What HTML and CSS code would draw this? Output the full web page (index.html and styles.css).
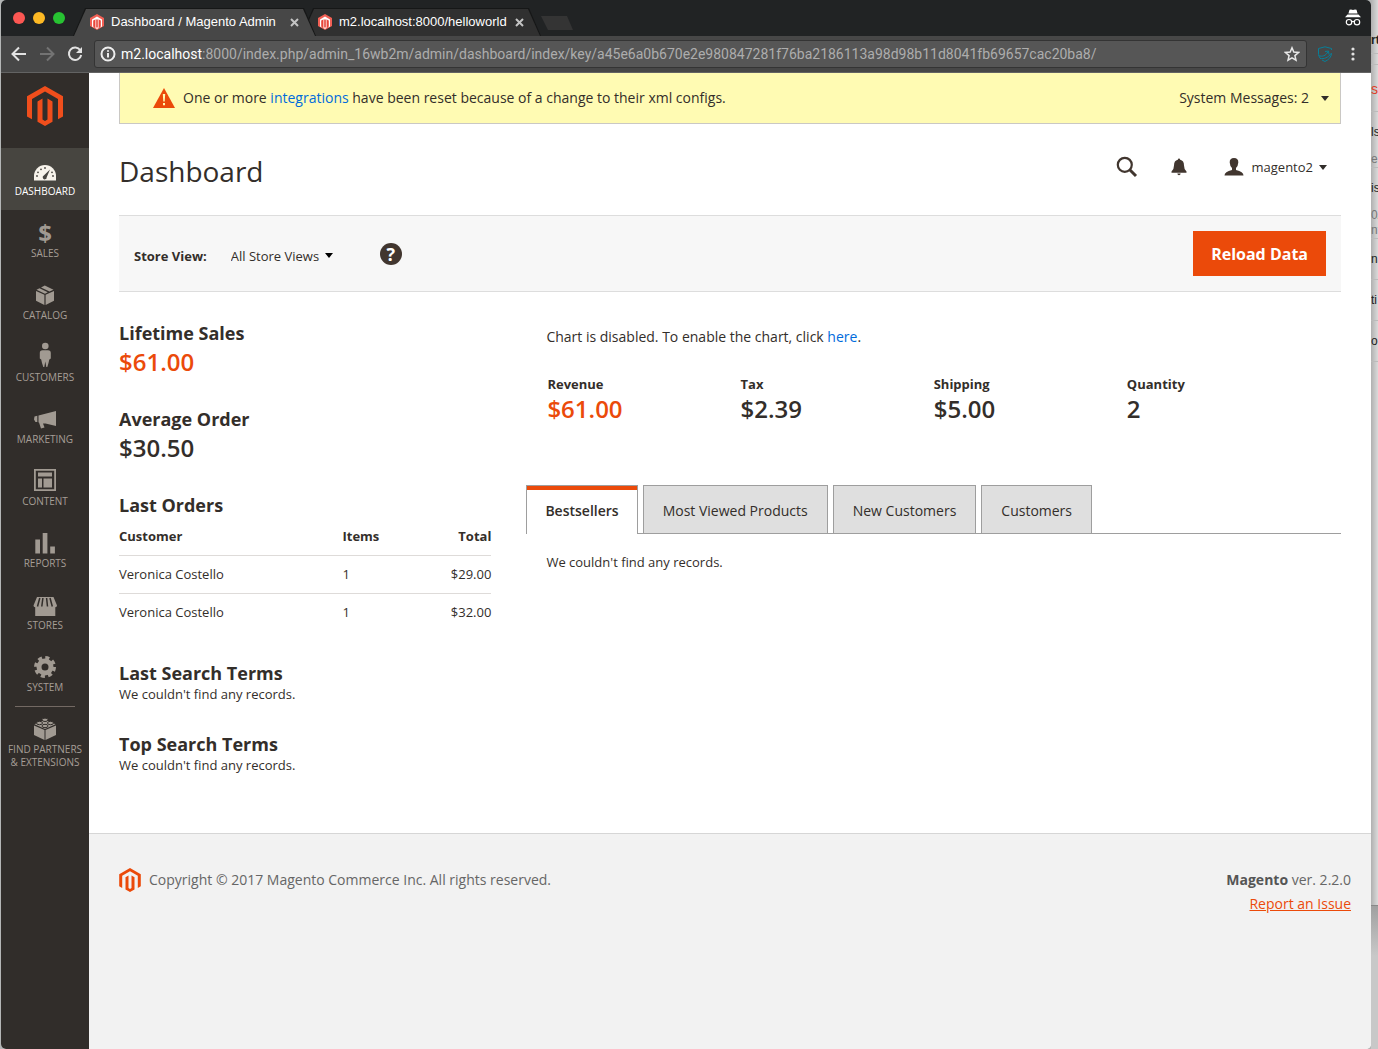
FILE: index.html
```html
<!DOCTYPE html>
<html lang="en">
<head>
    <meta charset="UTF-8">
    <meta name="viewport" content="width=device-width, initial-scale=1.0">
    <title>Dashboard / Magento Admin</title>
    <link rel="stylesheet" href="styles.css">
</head>
<body>
    <!-- Shared logo shape -->
    <svg class="defs" width="0" height="0" aria-hidden="true">
        <symbol id="logo" viewBox="0 0 36 40">
            <path d="M18 0 L36 10.300V30.500L31 33.300V13L18 5.500L5 13V33.300L0 30.500V10.300Z"/>
            <path d="M15.500 12.500V33.500L18 35L20.500 33.500V12.500L25.500 15.500V35.700L18 40L10.500 35.700V15.500Z"/>
        </symbol>
        <symbol id="favicon" viewBox="0 0 14 16">
            <path fill="#f26055" d="M7 0 14 4V12L7 16 0 12V4Z"/>
            <path fill="#fff" d="M7 2.500 12 5.500V12.500L10.500 13.400V6.500L8.500 5.300V14L7 15 5.500 14V5.300L3.500 6.500V13.400L2 12.500V5.500Z"/>
            <path fill="#e02a1e" d="M6.300 5.500H7.700V13.500H6.300ZM3.500 6.500 4.500 6V13L3.500 12.500ZM9.500 6 10.500 6.500V12.500L9.500 13Z"/>
        </symbol>
    </svg>

    <div class="browser">
        <div class="tab-strip">
            <div class="lights">
                <span class="light red"></span>
                <span class="light yellow"></span>
                <span class="light green"></span>
            </div>
            <div class="browser-tab current">
                <svg class="favicon"><use href="#favicon"/></svg>
                <span class="tab-title">Dashboard / Magento Admin</span>
                <button class="tab-close" aria-label="Close tab">
                    <svg width="9" height="9" viewBox="0 0 9 9"><path d="M1 1 8 8M8 1 1 8"/></svg>
                </button>
            </div>
            <div class="browser-tab">
                <svg class="favicon"><use href="#favicon"/></svg>
                <span class="tab-title">m2.localhost:8000/helloworld</span>
                <button class="tab-close" aria-label="Close tab">
                    <svg width="9" height="9" viewBox="0 0 9 9"><path d="M1 1 8 8M8 1 1 8"/></svg>
                </button>
            </div>
            <button class="new-tab" aria-label="New tab"></button>
            <svg class="incognito" width="18" height="18" viewBox="0 0 18 18">
                <path fill="#fff" d="M5.500 0.800 7 0.400 9 1 11 0.400 12.500 0.800 13.600 4.600H4.400ZM3.500 5.600H14.500L17 8.200H1Z"/>
                <g fill="none" stroke="#fff" stroke-width="1.200"><circle cx="5" cy="13.200" r="2.700"/><circle cx="13" cy="13.200" r="2.700"/><path d="M7.700 12.800Q9 12 10.300 12.800"/></g>
            </svg>
        </div>

        <div class="nav-bar">
            <button class="nav-button" aria-label="Back">
                <svg width="16" height="16" viewBox="0 0 16 16"><path d="M15 8H2M8 1.500 1.500 8 8 14.500"/></svg>
            </button>
            <button class="nav-button disabled" aria-label="Forward">
                <svg width="16" height="16" viewBox="0 0 16 16"><path d="M1 8H14M8 1.500 14.500 8 8 14.500"/></svg>
            </button>
            <button class="nav-button" aria-label="Reload">
                <svg width="16" height="16" viewBox="0 0 16 16"><path d="M13.300 4.300A6.200 6.200 0 1 0 14.200 9"/><path class="solid" d="M15 1V7H9Z"/></svg>
            </button>
            <div class="address">
                <svg class="info" width="16" height="16" viewBox="0 0 16 16"><circle cx="8" cy="8" r="6.500"/><path d="M8 7V11.500M8 4.200V5.800"/></svg>
                <span class="host">m2.localhost</span>
                <input type="text" class="url" aria-label="Address" value=":8000/index.php/admin_16wb2m/admin/dashboard/index/key/a45e6a0b670e2e980847281f76ba2186113a98d98b11d8041fb69657cac20ba8/">
                <svg class="star" width="16" height="16" viewBox="0 0 16 16"><path d="M8 1.800 9.800 6.100 14.500 6.500 10.900 9.600 12 14.200 8 11.800 4 14.200 5.100 9.600 1.500 6.500 6.200 6.100Z"/></svg>
            </div>
            <svg class="shield" width="16" height="16" viewBox="0 0 16 16"><path d="M14.500 4V2.500L8 0.800 1.500 2.500V7C1.500 9 2 10.500 3 12M5 14 8 15.500C12 13.500 14.300 11 14.500 7.500"/><path d="M1.500 9.500C5 11 9 10 11 5.500M8 5.500 11.500 5 12 8.500M3 12.500C7 13 11 12 14.500 7"/></svg>
            <svg class="dots" width="4" height="14" viewBox="0 0 4 14"><circle cx="2" cy="2" r="1.600"/><circle cx="2" cy="7" r="1.600"/><circle cx="2" cy="12" r="1.600"/></svg>
        </div>

        <div class="admin">
            <nav class="menu">
                <a href="#" class="menu-logo" aria-label="Magento"><svg width="36" height="40"><use href="#logo"/></svg></a>
                <a href="#" class="menu-item active">
                    <svg viewBox="0 0 24 24"><path d="M1 23.500V19A11 11 0 0 1 23 19V23.500Z"/><g class="cut"><path d="M17 12.500 13.700 20.200A2 2 0 1 1 10.800 18.600Z"/><circle cx="4" cy="19" r="0.900"/><circle cx="5" cy="15.300" r="0.900"/><circle cx="8" cy="12.300" r="0.900"/><circle cx="12" cy="11" r="0.900"/><circle cx="19" cy="15.300" r="0.900"/><circle cx="20" cy="19" r="0.900"/></g></svg>
                    <span>Dashboard</span>
                </a>
                <a href="#" class="menu-item">
                    <svg viewBox="0 0 24 24"><text class="dollar" x="12" y="23" text-anchor="middle">$</text></svg>
                    <span>Sales</span>
                </a>
                <a href="#" class="menu-item">
                    <svg viewBox="0 0 24 24"><path d="M3 10 11.400 13.800V24L3 19.800ZM12.600 13.800 21 10V19.800L12.600 24ZM3.500 8.800 6.500 7.300 14.800 11.300 12 12.700ZM8 6.500 11.800 4.500 20.500 8.800 16.500 10.600Z"/></svg>
                    <span>Catalog</span>
                </a>
                <a href="#" class="menu-item">
                    <svg viewBox="0 0 24 24"><circle cx="12.300" cy="3" r="3.300"/><path d="M9.500 7.200H15Q17.800 7.200 17.800 10V15.500L16.300 16.500 15.500 20 14.300 24H13.300L12.300 18.500 11.300 24H10.300L9 20 8.200 16.500 6.800 15.500V10Q6.800 7.200 9.500 7.200Z"/></svg>
                    <span>Customers</span>
                </a>
                <a href="#" class="menu-item">
                    <svg viewBox="0 0 24 24"><path d="M5.500 10.500 23 6V21L12.500 18.500H10L11.500 22.500 8 23.500 6 17.500H5.500ZM1.500 11.500 4.300 10.800V17H2.500L1 14.500Z"/></svg>
                    <span>Marketing</span>
                </a>
                <a href="#" class="menu-item">
                    <svg viewBox="0 0 24 24"><path fill-rule="evenodd" d="M1 2H23V24H1ZM2.800 3.800V22.200H21.200V3.800ZM5 5.500H19V9.500H5ZM5 11.500H9V20.500H5ZM10.500 11.500H19V20.500H10.500Z"/></svg>
                    <span>Content</span>
                </a>
                <a href="#" class="menu-item">
                    <svg viewBox="0 0 24 24"><path d="M2.300 10.500H7V24.500H2.300ZM9.700 4H14.400V24.500H9.700ZM17.200 17.500H21.900V24.500H17.200Z"/></svg>
                    <span>Reports</span>
                </a>
                <a href="#" class="menu-item">
                    <svg viewBox="0 0 24 24"><path d="M4 6H20.500L24 14.500Q24 16.200 22.300 16.200V25H2.200V16.200Q0.500 16.200 0.500 14.500Z"/><path class="stripes" d="M6.800 7 4.500 15.500M9.900 7 8.800 15.500M13.600 7 14.500 15.500M17 7 19.300 15.500"/></svg>
                    <span>Stores</span>
                </a>
                <a href="#" class="menu-item">
                    <svg viewBox="0 0 24 24"><circle class="teeth" cx="12" cy="14" r="9"/><circle class="ring" cx="12" cy="14" r="6"/></svg>
                    <span>System</span>
                </a>
                <a href="#" class="menu-item partners">
                    <svg viewBox="0 0 24 24"><path d="M1 10.500 11.500 15V25L1 20ZM12.500 15 23 10.500V20L12.500 25ZM1.500 9.300 12 4.500 22.500 9.300 12 14Z"/><g class="studs"><ellipse cx="12" cy="4.800" rx="3" ry="1.700"/><ellipse cx="6.500" cy="8" rx="3" ry="1.700"/><ellipse cx="17.500" cy="8" rx="3" ry="1.700"/><ellipse cx="12" cy="11" rx="3" ry="1.700"/></g></svg>
                    <span>Find Partners<br>&amp; Extensions</span>
                </a>
            </nav>

            <div class="page">
                <div class="page-main">
                    <div class="system-messages">
                        <svg width="24" height="20" viewBox="0 0 24 20"><path fill="#eb4a0a" d="M12 0 23 20H1Z"/><path fill="#fffbb3" d="M10.800 6H13.200L12.700 13.500H11.300ZM11 15H13V17.200H11Z"/></svg>
                        <p>One or more <a href="#">integrations</a> have been reset because of a change to their xml configs.</p>
                        <button class="dropdown">System Messages: 2</button>
                    </div>

                    <header class="page-header">
                        <h1>Dashboard</h1>
                        <button class="icon-button" aria-label="Search">
                            <svg width="22" height="22" viewBox="0 0 22 22"><circle cx="8.800" cy="8.800" r="7" fill="none" stroke="#41362f" stroke-width="2.200"/><path d="M14 14 20 20" stroke="#41362f" stroke-width="3"/></svg>
                        </button>
                        <button class="icon-button bell" aria-label="Notifications">
                            <svg width="16" height="18" viewBox="0 0 16 18"><path fill="#41362f" d="M8 0.500Q9 0.500 9.200 1.700 13 2.500 13 7.500 13 11.500 15.500 13.500V14.800H0.500V13.500Q3 11.500 3 7.500 3 2.500 6.800 1.700 7 0.500 8 0.500ZM6.300 15.600H9.700Q9.500 17.300 8 17.300 6.500 17.300 6.300 15.600Z"/></svg>
                        </button>
                        <button class="dropdown account">
                            <svg width="20" height="18" viewBox="0 0 20 18"><path fill="#41362f" d="M10 0Q14.500 0 14.300 4.500 14 8.500 12 10V12Q19.500 13.500 19.500 17.500H0.500Q0.500 13.500 8 12V10Q6 8.500 5.700 4.500 5.500 0 10 0Z"/></svg>
                            magento2
                        </button>
                    </header>

                    <div class="toolbar">
                        <label for="store">Store View:</label>
                        <div class="store-select">
                            <select id="store">
                                <option>All Store Views</option>
                            </select>
                        </div>
                        <a href="#" class="help" aria-label="Help">?</a>
                        <button class="primary">Reload Data</button>
                    </div>

                    <div class="dashboard">
                        <div class="side">
                            <section>
                                <h2>Lifetime Sales</h2>
                                <strong class="amount highlight">$61.00</strong>
                            </section>
                            <section>
                                <h2>Average Order</h2>
                                <strong class="amount">$30.50</strong>
                            </section>
                            <section>
                                <h2>Last Orders</h2>
                                <table>
                                    <thead>
                                        <tr><th>Customer</th><th>Items</th><th>Total</th></tr>
                                    </thead>
                                    <tbody>
                                        <tr><td>Veronica Costello</td><td>1</td><td>$29.00</td></tr>
                                        <tr><td>Veronica Costello</td><td>1</td><td>$32.00</td></tr>
                                    </tbody>
                                </table>
                            </section>
                            <section>
                                <h2>Last Search Terms</h2>
                                <p class="empty">We couldn't find any records.</p>
                            </section>
                            <section>
                                <h2>Top Search Terms</h2>
                                <p class="empty">We couldn't find any records.</p>
                            </section>
                        </div>

                        <div class="main">
                            <p class="chart-note">Chart is disabled. To enable the chart, click <a href="#">here</a>.</p>
                            <ul class="totals">
                                <li><span>Revenue</span><strong class="amount highlight">$61.00</strong></li>
                                <li><span>Tax</span><strong class="amount">$2.39</strong></li>
                                <li><span>Shipping</span><strong class="amount">$5.00</strong></li>
                                <li><span>Quantity</span><strong class="amount">2</strong></li>
                            </ul>
                            <div class="tabs">
                                <a href="#" class="active">Bestsellers</a>
                                <a href="#">Most Viewed Products</a>
                                <a href="#">New Customers</a>
                                <a href="#">Customers</a>
                            </div>
                            <p class="empty tab-content">We couldn't find any records.</p>
                        </div>
                    </div>
                </div>

                <footer class="footer">
                    <svg width="22" height="24"><use href="#logo"/></svg>
                    <p class="copyright">Copyright © 2017 Magento Commerce Inc. All rights reserved.</p>
                    <div class="version">
                        <p><strong>Magento</strong> ver. 2.2.0</p>
                        <a href="#">Report an Issue</a>
                    </div>
                </footer>
            </div>
        </div>
    </div>

    <!-- Window behind the browser -->
    <div class="behind">
        <div class="row title"><b>rt</b></div>
        <div class="row thin"></div>
        <div class="row heading"><span>s</span></div>
        <div class="row double"><span>ls</span><small>en</small></div>
        <div class="row triple"><span>is</span><small>0/</small><small>nt</small></div>
        <div class="row"><span>na</span></div>
        <div class="row"><span>ti</span></div>
        <div class="row"><span>or</span></div>
        <div class="rest"></div>
        <div class="shadow"></div>
    </div>
</body>
</html>
```
FILE: styles.css
```css
* {
    box-sizing: border-box;
}
body {
    margin: 0;
    padding-left: 1px;
    min-height: 100vh;
    display: flex;
    background: #b4b6b6;
    color: #332e2a;
    font-family: "Open Sans", sans-serif;
    font-size: 13px;
    line-height: 16px;
}
h1, h2, p, ul {
    margin: 0;
    padding: 0;
}
a {
    color: #006bdc;
    text-decoration: none;
}
button, input, select {
    margin: 0;
    padding: 0;
    border: 0;
    background: none;
    color: inherit;
    font: inherit;
}
svg {
    flex: none;
}
.defs {
    position: absolute;
}

/* Browser window */
.browser {
    flex: 1;
    min-width: 0;
    display: flex;
    flex-direction: column;
    border-radius: 5px;
    overflow: hidden;
    background: #fff;
}
.tab-strip {
    display: flex;
    align-items: flex-end;
    height: 36px;
    padding-right: 9px;
    background: #212324;
    font-family: "Liberation Sans", sans-serif;
}
.lights {
    display: flex;
    gap: 8px;
    width: 72px;
    padding-left: 12px;
    align-self: center;
}
.light {
    width: 12px;
    height: 12px;
    border-radius: 50%;
}
.light.red {
    background: #fc5753;
}
.light.yellow {
    background: #fdb924;
}
.light.green {
    background: #27c232;
}
.browser-tab {
    position: relative;
    display: flex;
    align-items: center;
    width: 243px;
    height: 28px;
    padding: 0 17px;
    color: #fff;
}
.browser-tab + .browser-tab {
    width: 240px;
    margin-left: -15px;
}
.browser-tab::before, .browser-tab::after {
    content: "";
    position: absolute;
    inset: 0;
    background: #161717;
    clip-path: polygon(0 100%, 12px 0, calc(100% - 12px) 0, 100% 100%);
}
.browser-tab::after {
    inset: 1px 1px 0;
    background: #303030;
}
.browser-tab.current {
    z-index: 1;
}
.browser-tab.current::after {
    background: #474747;
}
.browser-tab > * {
    position: relative;
    z-index: 1;
}
.favicon {
    width: 14px;
    height: 16px;
    margin-right: 7px;
}
.tab-title {
    flex: 1;
    white-space: nowrap;
}
.tab-close {
    height: 9px;
}
.tab-close svg {
    display: block;
    fill: none;
    stroke: #c4c4c4;
    stroke-width: 2;
}
.new-tab {
    width: 32px;
    height: 14px;
    margin-bottom: 6px;
    background: #343434;
    clip-path: polygon(0 0, 26px 0, 100% 100%, 7px 100%);
}
.incognito {
    margin: 0 0 9px auto;
}
.nav-bar {
    display: flex;
    align-items: center;
    height: 37px;
    padding: 0 16px 0 10px;
    border-bottom: 1px solid #636363;
    background: #474747;
    font-family: Roboto, sans-serif;
    font-size: 14px;
}
.nav-button {
    width: 28px;
    height: 16px;
    text-align: left;
}
.nav-button svg {
    display: block;
    fill: none;
    stroke: #e2e2e2;
    stroke-width: 2;
}
.nav-button .solid {
    fill: #e2e2e2;
    stroke: none;
}
.nav-button.disabled svg {
    stroke: #737373;
}
.address {
    flex: 1;
    display: flex;
    align-items: center;
    height: 28px;
    margin: 0 10px 0 -1px;
    padding: 0 6px 0 5px;
    border: 1px solid #343434;
    border-radius: 3px;
    background: #565656;
}
.info {
    margin-right: 5px;
    fill: none;
    stroke: #eee;
    stroke-width: 2;
}
.host {
    color: #fff;
}
.url {
    flex: 1;
    min-width: 0;
    color: #adadad;
}
.star {
    fill: none;
    stroke: #e8e8e8;
    stroke-width: 1.5;
}
.shield {
    margin-right: 18px;
    fill: none;
    stroke: #087f99;
    stroke-width: 1;
}
.dots {
    fill: #e2e2e2;
}

/* Side menu */
.admin {
    flex: 1;
    display: flex;
}
.menu {
    width: 88px;
    background: #312d2a;
}
.menu-logo {
    display: block;
    height: 75px;
    padding: 13px 0 0 26px;
    fill: #f04e1c;
}
.menu-item {
    position: relative;
    display: flex;
    flex-direction: column;
    align-items: center;
    height: 62px;
    padding-top: 9px;
    color: #a69e96;
    font-size: 10px;
    line-height: 13px;
    text-align: center;
    text-transform: uppercase;
    white-space: nowrap;
}
.menu-item svg {
    width: 24px;
    height: 24px;
    margin-bottom: 4px;
    overflow: visible;
    fill: #a19a92;
}
.menu-item.active {
    background: #474540;
    color: #fff;
}
.menu-item.active svg {
    fill: #f7f3eb;
}
.menu-item .cut {
    fill: #474540;
}
.dollar {
    font-size: 24px;
    font-weight: 700;
}
.stripes {
    fill: none;
    stroke: #312d2a;
    stroke-width: 1.5;
}
.teeth {
    fill: none;
    stroke: #a19a92;
    stroke-width: 4;
    stroke-dasharray: 3.9 3.17;
}
.ring {
    fill: none;
    stroke: #a19a92;
    stroke-width: 5;
}
.studs {
    fill: #a19a92;
    stroke: #312d2a;
    stroke-width: 1;
}
.partners::before {
    content: "";
    position: absolute;
    top: 0;
    left: 14px;
    right: 14px;
    height: 1px;
    background: #736963;
}

/* Page */
.page {
    flex: 1;
    min-width: 0;
    display: flex;
    flex-direction: column;
}
.page-main {
    padding: 0 30px 59px;
}
.system-messages {
    display: flex;
    align-items: center;
    height: 51px;
    padding: 0 11px 0 32px;
    border: 1px solid #cac8c4;
    border-top: 0;
    background: #fffbb3;
    font-size: 14px;
}
.system-messages p {
    flex: 1;
    margin-left: 7px;
}
.dropdown {
    display: flex;
    align-items: center;
    white-space: nowrap;
}
.dropdown::after, .store-select::after {
    content: "";
    margin-left: 12px;
    border: 4px solid transparent;
    border-top: 5px solid #312d2a;
    border-bottom: 0;
}
.page-header {
    display: flex;
    align-items: center;
    height: 91px;
    padding: 0 14px 5px 0;
}
h1 {
    flex: 1;
    padding-top: 8px;
    font-size: 28px;
    line-height: 38px;
    font-weight: 400;
}
.icon-button {
    height: 22px;
    margin-right: 33px;
}
.icon-button svg {
    display: block;
}
.icon-button.bell {
    height: 18px;
    margin-right: 37px;
}
.account svg {
    margin-right: 8px;
}
.account::after {
    margin-left: 6px;
}
.toolbar {
    display: flex;
    align-items: center;
    height: 77px;
    padding: 0 15px;
    border-top: 1px solid #ddd;
    border-bottom: 1px solid #ddd;
    background: #f7f7f7;
}
.toolbar label {
    margin-top: 4px;
    font-weight: 700;
}
.store-select {
    display: flex;
    align-items: center;
    margin: 4px 0 0 24px;
}
.store-select select {
    appearance: none;
}
.store-select::after {
    margin-left: 5px;
    border-top-color: #000;
}
.help {
    width: 22px;
    height: 22px;
    margin-left: 47px;
    border-radius: 50%;
    background: #41362f;
    color: #fff;
    font-size: 18px;
    line-height: 22px;
    font-weight: 700;
    text-align: center;
}
.primary {
    height: 45px;
    margin-left: auto;
    padding: 0 18px;
    background: #eb4a0a;
    color: #fff;
    font-size: 16px;
    font-weight: 700;
}

/* Dashboard */
.dashboard {
    display: grid;
    grid-template-columns: 16fr 35fr;
    gap: 35px;
    padding-top: 28px;
}
.side {
    display: flex;
    flex-direction: column;
    gap: 28px;
}
h2 {
    font-size: 18px;
    line-height: 26px;
    font-weight: 700;
}
.amount {
    display: block;
    font-size: 24px;
    line-height: 32px;
    font-weight: 600;
}
.highlight {
    color: #eb4a0a;
}
.empty {
    line-height: 17px;
}
table {
    width: 100%;
    margin-bottom: 1px;
    border-collapse: collapse;
    table-layout: fixed;
}
th, td {
    height: 38px;
    padding: 0;
    text-align: left;
    width: 20%;
}
th {
    height: 37px;
    font-weight: 700;
}
th:first-child {
    width: 60%;
}
th:last-child, td:last-child {
    text-align: right;
}
td {
    border-top: 1px solid #dedbd9;
}
.chart-note {
    padding: 8px 20px 0;
    font-size: 14px;
    line-height: 18px;
}
.totals {
    display: flex;
    margin: 30px 21px 60px;
    list-style: none;
}
.totals li {
    flex: 1;
    display: flex;
    flex-direction: column;
    gap: 1px;
}
.totals span {
    font-weight: 700;
}
.tabs {
    display: flex;
    gap: 5px;
    border-bottom: 1px solid #9e9e9e;
}
.tabs a {
    height: 48px;
    padding: 0 19px;
    border: 1px solid #9e9e9e;
    border-bottom: 0;
    background: #dfdfdf;
    color: #332e2a;
    font-size: 14px;
    line-height: 50px;
    white-space: nowrap;
}
.tabs a.active {
    height: 49px;
    margin-bottom: -1px;
    padding: 0 18px;
    background: #fff;
    box-shadow: inset 0 4px #eb4a0a;
    font-weight: 600;
}
.tab-content {
    padding: 20px;
}

.footer {
    flex: 1;
    display: flex;
    align-items: flex-start;
    padding: 34px 20px 0 30px;
    border-top: 1px solid #d6d6d6;
    background: #f2f2f2;
    color: #666;
    font-size: 14px;
    line-height: 24px;
}
.footer svg {
    fill: #eb4a0a;
}
.copyright {
    flex: 1;
    margin-left: 8px;
}
.version {
    text-align: right;
}
.version strong {
    color: #555;
}
.version a {
    color: #eb4a0a;
    text-decoration: underline;
}

/* Window behind */
.behind {
    width: 7px;
    overflow: hidden;
    display: flex;
    flex-direction: column;
    background: linear-gradient(90deg, #b0b0b0, #dadada);
    color: #222;
    font-family: "Liberation Sans", sans-serif;
    font-size: 12px;
}
.row {
    height: 41px;
    border-bottom: 1px solid #bbb;
    line-height: 40px;
}
.row span, .row small {
    display: block;
}
.row small {
    color: #777;
    font-size: 12px;
    line-height: 15px;
}
.row.title {
    height: 54px;
    padding-top: 26px;
    line-height: 28px;
}
.row.thin {
    height: 11px;
}
.row.heading {
    height: 47px;
    color: #e0402a;
    font-size: 14px;
    line-height: 48px;
}
.row.double, .row.triple {
    height: 56px;
    padding-top: 6px;
    line-height: 28px;
}
.row.triple {
    height: 71px;
}
.row span + small {
    margin-top: 6px;
}
.rest {
    height: 544px;
    border-bottom: 1px solid #888;
}
.shadow {
    flex: 1;
    background: linear-gradient(#a0a0a0, #c8c8c8 50px);
}
```
